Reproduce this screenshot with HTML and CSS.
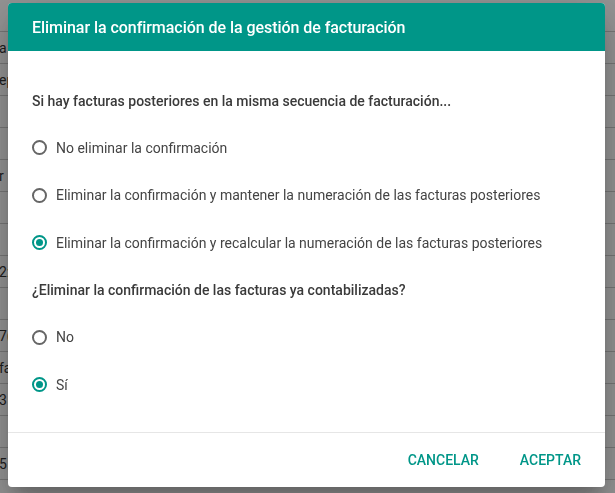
FILE: index.html
```html
<!DOCTYPE html>
<html lang="es">
<head>
<meta charset="utf-8">
<title>Eliminar la confirmación</title>
<link rel="stylesheet" href="styles.css">
</head>
<body>
<div class="page">
  <div class="row head"></div>
  <div class="row">a</div>
  <div class="row">ep</div>
  <div class="row"></div>
  <div class="row"></div>
  <div class="row">r</div>
  <div class="row"></div>
  <div class="row"></div>
  <div class="row">2:</div>
  <div class="row"></div>
  <div class="row">7(</div>
  <div class="row">fa</div>
  <div class="row">3</div>
  <div class="row"></div>
  <div class="row">5</div>
  <div class="row last"><span class="frag w1"></span><span class="frag w2"></span><span class="frag w3"></span><span class="frag w4"></span></div>
</div>
<div class="overlay"></div>
<div class="dialog">
  <div class="dialog-header">Eliminar la confirmación de la gestión de facturación</div>
  <div class="dialog-body">
    <div class="line question">Si hay facturas posteriores en la misma secuencia de facturación...</div>
    <label class="line option"><span class="radio"></span>No eliminar la confirmación</label>
    <label class="line option"><span class="radio"></span>Eliminar la confirmación y mantener la numeración de las facturas posteriores</label>
    <label class="line option"><span class="radio checked"></span>Eliminar la confirmación y recalcular la numeración de las facturas posteriores</label>
    <div class="line question">¿Eliminar la confirmación de las facturas ya contabilizadas?</div>
    <label class="line option"><span class="radio"></span>No</label>
    <label class="line option"><span class="radio checked"></span>Sí</label>
  </div>
  <div class="dialog-footer">
    <button class="btn">CANCELAR</button>
    <button class="btn">ACEPTAR</button>
  </div>
</div>
</body>
</html>
```
FILE: styles.css
```css
html, body {
  margin: 0;
  padding: 0;
  height: 100%;
  overflow: hidden;
}
body {
  font-family: Roboto, "Liberation Sans", Arial, sans-serif;
  background: #fff;
}
.page {
  display: flex;
  flex-direction: column;
}
.row {
  height: 32px;
  border-bottom: 1px solid #ccc;
  box-sizing: border-box;
  display: flex;
  align-items: center;
  font-size: 14px;
  color: #333;
  margin-left: -1px;
}
.row.last {
  gap: 80px;
  padding-left: 30px;
  align-items: flex-end;
  overflow: hidden;
}
.frag {
  height: 3px;
  background: #666;
  margin-bottom: 28px;
}
.w1 { width: 12px; }
.w2 { width: 60px; }
.w3 { width: 70px; }
.w4 { width: 40px; }
.overlay {
  position: fixed;
  inset: 0;
  background: rgba(0, 0, 0, 0.42);
}
.dialog {
  position: fixed;
  left: 8px;
  top: 3px;
  width: 597px;
  height: 484px;
  background: #fff;
  border-radius: 4px;
  overflow: hidden;
  box-shadow: 0 11px 15px -7px rgba(0,0,0,.2), 0 24px 38px 3px rgba(0,0,0,.14), 0 9px 46px 8px rgba(0,0,0,.12);
  display: flex;
  flex-direction: column;
}
.dialog-header {
  height: 48px;
  flex: none;
  background: #009688;
  color: #fff;
  font-size: 16px;
  font-weight: 500;
  display: flex;
  align-items: center;
  padding: 0 24px;
  letter-spacing: -0.05px;
}
.dialog-body {
  flex: none;
  height: 382px;
  box-sizing: border-box;
  padding: 26px 24px 0;
  border-bottom: 1px solid #e6e6e6;
  display: flex;
  flex-direction: column;
}
.line {
  height: 47.33px;
  flex: none;
  display: flex;
  align-items: center;
  font-size: 14px;
}
.question {
  font-weight: 500;
  color: #3a3a3a;
}
.option {
  color: #444;
  gap: 9px;
}
.radio {
  width: 15px;
  height: 15px;
  box-sizing: border-box;
  border: 2px solid #666;
  border-radius: 50%;
  flex: none;
  display: flex;
  align-items: center;
  justify-content: center;
}
.radio.checked {
  border-color: #009688;
}
.radio.checked::after {
  content: "";
  width: 7px;
  height: 7px;
  border-radius: 50%;
  background: #009688;
}
.dialog-footer {
  flex: 1;
  display: flex;
  justify-content: flex-end;
  align-items: center;
  gap: 9px;
  padding: 0 8px 0 0;
}
.btn {
  background: none;
  border: none;
  font-family: inherit;
  font-size: 14px;
  font-weight: 500;
  color: #009688;
  padding: 8px 16px;
  letter-spacing: 0;
}
```
